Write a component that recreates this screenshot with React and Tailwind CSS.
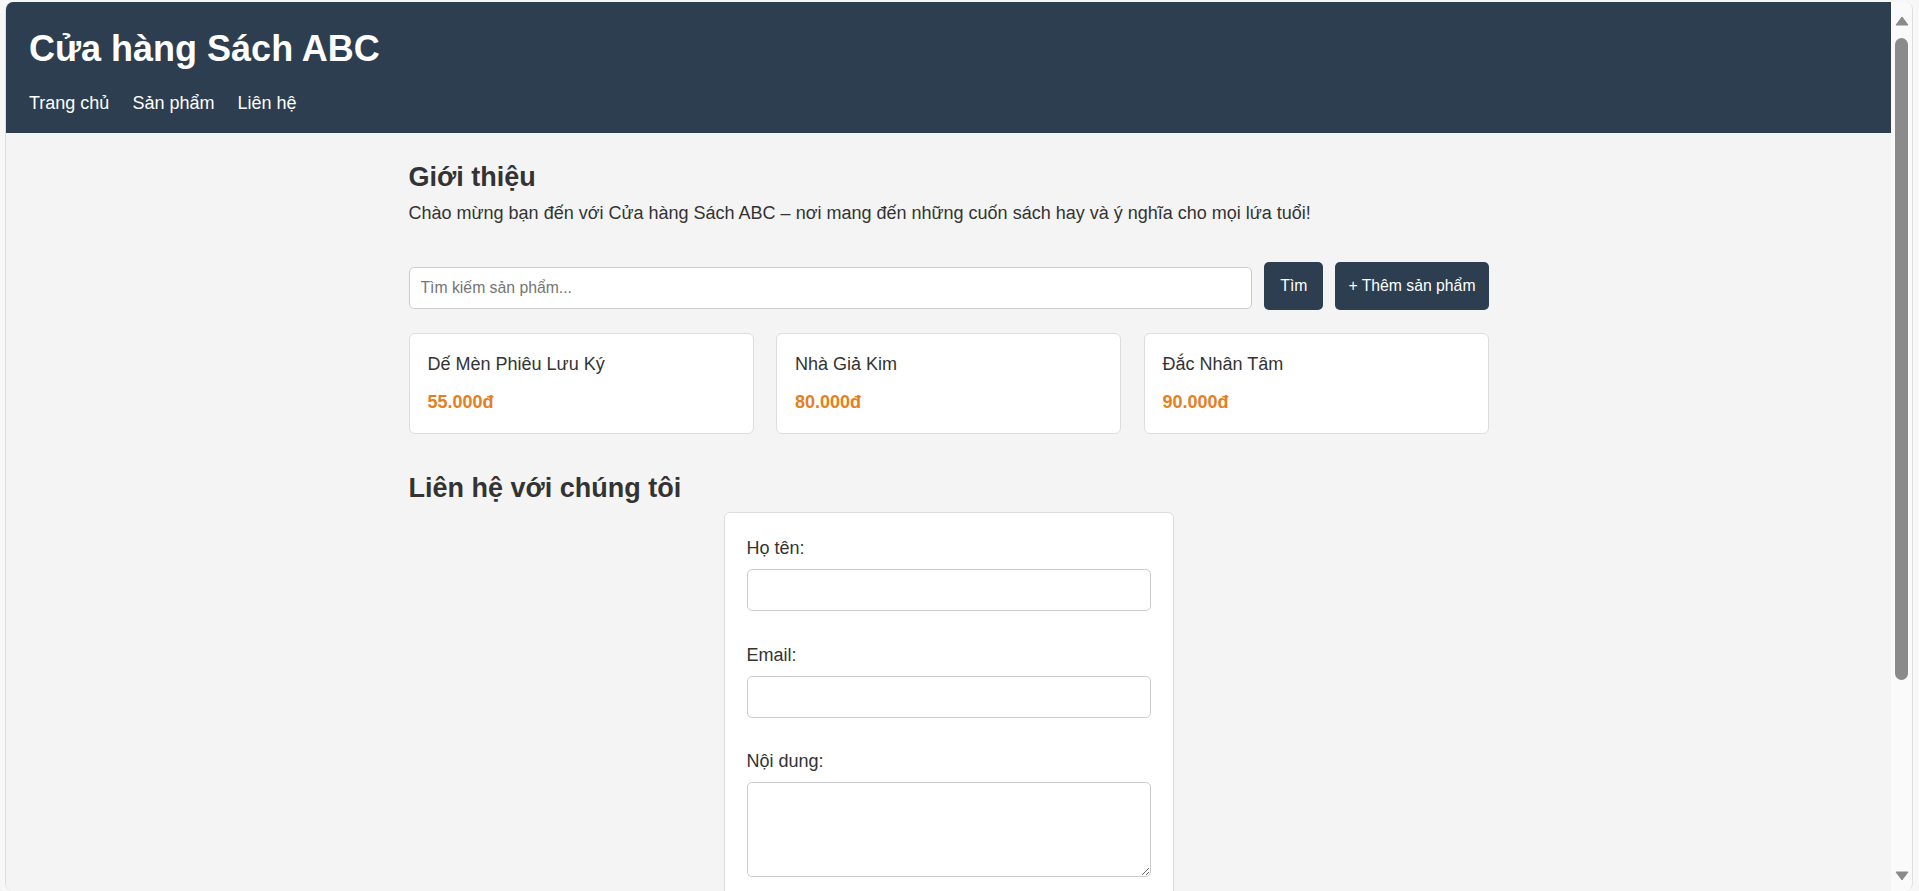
import React from "react"

const products = [
  { name: "Dế Mèn Phiêu Lưu Ký", price: "55.000đ" },
  { name: "Nhà Giả Kim", price: "80.000đ" },
  { name: "Đắc Nhân Tâm", price: "90.000đ" },
]

function ScrollBar() {
  return (
    <div className="w-[21px] bg-[#fafafa] flex flex-col items-center pt-[14px] pb-[10px]">
      <svg width="14" height="10" viewBox="0 0 14 10" className="shrink-0">
        <path d="M7 1 L13 9 L1 9 Z" fill="#8a8a8a" stroke="#8a8a8a" strokeLinejoin="round" />
      </svg>
      <div className="mt-[12px] w-[13px] h-[642px] rounded-full bg-[#8b8b8b]"></div>
      <div className="flex-1"></div>
      <svg width="14" height="10" viewBox="0 0 14 10" className="shrink-0">
        <path d="M1 1 L13 1 L7 9 Z" fill="#8a8a8a" stroke="#8a8a8a" strokeLinejoin="round" />
      </svg>
    </div>
  )
}

function App() {
  return (
    <div className="h-[891px] overflow-hidden bg-[#f7f7f7] pt-[2px] pl-[5px] pr-[6px] font-['Liberation_Sans',Arial,sans-serif]">
      <div className="h-full flex rounded-[8px] overflow-hidden border-l border-r border-[#dedede]">
        <div className="flex-1 bg-[#f4f4f4] overflow-hidden text-[#333]">
          <header className="bg-[#2c3e50] text-white px-[23px] pt-[26px] pb-[19px]">
            <h1 className="text-[36px] font-bold leading-[41px]">Cửa hàng Sách ABC</h1>
            <nav className="mt-[24px] flex gap-[23px] text-[18px] leading-[21px]">
              <a href="#">Trang chủ</a>
              <a href="#">Sản phẩm</a>
              <a href="#">Liên hệ</a>
            </nav>
          </header>

          <main className="max-w-[1080px] mx-auto pt-[29px]">
            <section>
              <h2 className="text-[27px] font-bold leading-[31px]">Giới thiệu</h2>
              <p className="mt-[10px] text-[18px] leading-[21px]">
                Chào mừng bạn đến với Cửa hàng Sách ABC – nơi mang đến những cuốn sách hay và ý nghĩa cho mọi lứa tuổi!
              </p>
            </section>

            <div className="mt-[38px] flex items-start gap-[12px]">
              <input
                type="text"
                placeholder="Tìm kiếm sản phẩm..."
                className="flex-1 mt-[5px] h-[42px] px-[11px] bg-white border border-[#ccc] rounded-[5px] text-[15.75px] placeholder:text-[#757575] outline-none"
              />
              <button className="h-[48px] px-[16px] bg-[#2c3e50] text-white rounded-[5px] text-[15.75px]">Tìm</button>
              <button className="h-[48px] px-[13px] bg-[#2c3e50] text-white rounded-[5px] text-[15.75px]">+ Thêm sản phẩm</button>
            </div>

            <div className="mt-[23px] grid grid-cols-3 gap-[22.5px]">
              {products.map(p => (
                <div key={p.name} className="bg-white border border-[#ddd] rounded-[6px] px-[18px] pt-[20px] pb-[20px]">
                  <div className="text-[18px] leading-[21px]">{p.name}</div>
                  <div className="mt-[17px] text-[18px] leading-[21px] font-bold text-[#e67e22]">{p.price}</div>
                </div>
              ))}
            </div>

            <section className="mt-[39px]">
              <h2 className="text-[27px] font-bold leading-[31px]">Liên hệ với chúng tôi</h2>
              <form className="mt-[8px] mx-auto w-[450px] bg-white border border-[#ddd] rounded-[6px] px-[22px] pt-[25px] pb-[24px]">
                <label className="block text-[18px] leading-[21px] mb-[10px]">Họ tên:</label>
                <input type="text" className="block w-full h-[42px] mb-[34px] border border-[#ccc] rounded-[5px] px-[10px] outline-none" />
                <label className="block text-[18px] leading-[21px] mb-[10px]">Email:</label>
                <input type="email" className="block w-full h-[42px] mb-[33px] border border-[#ccc] rounded-[5px] px-[10px] outline-none" />
                <label className="block text-[18px] leading-[21px] mb-[10px]">Nội dung:</label>
                <textarea className="block w-full h-[95px] border border-[#ccc] rounded-[5px] px-[10px] outline-none"></textarea>
              </form>
            </section>
          </main>
        </div>
        <ScrollBar />
      </div>
    </div>
  )
}

export default App
